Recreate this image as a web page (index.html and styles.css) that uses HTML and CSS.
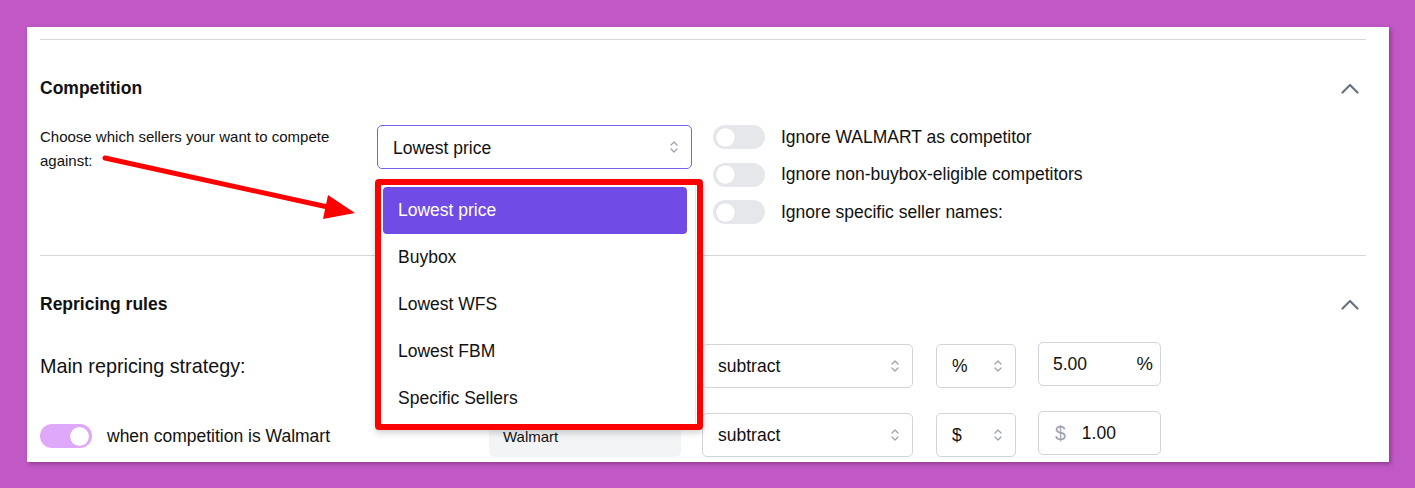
FILE: index.html
```html
<!DOCTYPE html>
<html>
<head>
<meta charset="utf-8">
<link rel="stylesheet" href="styles.css">
</head>
<body>
<div class="card">
  <section class="sec sec-comp">
    <div class="sec-head">
      <h2>Competition</h2>
      <svg class="chev" width="18" height="12" viewBox="0 0 18 12"><path d="M1.5 10.5 L9 3 L16.5 10.5" fill="none" stroke="#6b7280" stroke-width="2.2" stroke-linecap="round" stroke-linejoin="round"/></svg>
    </div>
    <div class="comp-row">
      <div class="comp-label">Choose which sellers your want to compete against:</div>
      <div class="select select-main">
        <span class="sel-text">Lowest price</span>
        <svg class="updown" width="10" height="16" viewBox="0 0 10 16"><path d="M2 6 L5 3 L8 6 M2 10 L5 13 L8 10" fill="none" stroke="#9ca3af" stroke-width="1.3" stroke-linecap="round" stroke-linejoin="round"/></svg>
      </div>
      <div class="toggles">
        <div class="t-row"><span class="toggle"><span class="knob"></span></span><span class="t-label">Ignore WALMART as competitor</span></div>
        <div class="t-row"><span class="toggle"><span class="knob"></span></span><span class="t-label">Ignore non-buybox-eligible competitors</span></div>
        <div class="t-row"><span class="toggle"><span class="knob"></span></span><span class="t-label">Ignore specific seller names:</span></div>
      </div>
    </div>
  </section>
  <section class="sec sec-rules">
    <div class="sec-head">
      <h2>Repricing rules</h2>
      <svg class="chev" width="18" height="12" viewBox="0 0 18 12"><path d="M1.5 10.5 L9 3 L16.5 10.5" fill="none" stroke="#6b7280" stroke-width="2.2" stroke-linecap="round" stroke-linejoin="round"/></svg>
    </div>
    <div class="rule-row first">
      <div class="rule-label big">Main repricing strategy:</div>
      <div class="mid"></div>
      <div class="select op">
        <span>subtract</span>
        <svg class="updown" width="10" height="16" viewBox="0 0 10 16"><path d="M2 6 L5 3 L8 6 M2 10 L5 13 L8 10" fill="none" stroke="#9ca3af" stroke-width="1.3" stroke-linecap="round" stroke-linejoin="round"/></svg>
      </div>
      <div class="select unit">
        <span>%</span>
        <svg class="updown" width="10" height="16" viewBox="0 0 10 16"><path d="M2 6 L5 3 L8 6 M2 10 L5 13 L8 10" fill="none" stroke="#9ca3af" stroke-width="1.3" stroke-linecap="round" stroke-linejoin="round"/></svg>
      </div>
      <div class="input">
        <span>5.00</span><span class="suffix">%</span>
      </div>
    </div>
    <div class="rule-row second">
      <div class="rule-label"><span class="toggle on"><span class="knob"></span></span><span class="t-label">when competition is Walmart</span></div>
      <div class="mid"><div class="chip">Walmart</div></div>
      <div class="select op">
        <span>subtract</span>
        <svg class="updown" width="10" height="16" viewBox="0 0 10 16"><path d="M2 6 L5 3 L8 6 M2 10 L5 13 L8 10" fill="none" stroke="#9ca3af" stroke-width="1.3" stroke-linecap="round" stroke-linejoin="round"/></svg>
      </div>
      <div class="select unit">
        <span>$</span>
        <svg class="updown" width="10" height="16" viewBox="0 0 10 16"><path d="M2 6 L5 3 L8 6 M2 10 L5 13 L8 10" fill="none" stroke="#9ca3af" stroke-width="1.3" stroke-linecap="round" stroke-linejoin="round"/></svg>
      </div>
      <div class="input dollar">
        <span class="prefix">$</span><span>1.00</span>
      </div>
    </div>
  </section>

  <div class="dropdown">
    <ul class="list">
      <li class="active">Lowest price</li>
      <li>Buybox</li>
      <li>Lowest WFS</li>
      <li>Lowest FBM</li>
      <li>Specific Sellers</li>
    </ul>
  </div>
</div>
<svg class="arrow" width="1415" height="488" viewBox="0 0 1415 488">
  <line x1="105" y1="158" x2="330" y2="207.5" stroke="#ff0000" stroke-width="5" stroke-linecap="round"/>
  <polygon points="355,213 328,195 323,219" fill="#ff0000"/>
</svg>
</body>
</html>
```
FILE: styles.css
```css
* { box-sizing: border-box; }
html, body { margin: 0; padding: 0; }
body {
  background: #c158c5;
  font-family: "Liberation Sans", Arial, Helvetica, sans-serif;
  color: #111;
  width: 1415px;
  height: 488px;
  position: relative;
  overflow: hidden;
  padding-top: 27px;
  padding-left: 27px;
}
.card {
  position: relative;
  width: 1362px;
  height: 435px;
  background: #fff;
  padding: 12px 23px 0 13px;
  overflow: hidden;
  box-shadow: 2px 2px 4px rgba(60, 0, 60, 0.35);
}
.sec {
  border-top: 1px solid #d6d6da;
  padding-top: 35px;
}
.sec-comp { height: 216px; }
.sec-head {
  display: flex;
  justify-content: space-between;
  align-items: center;
  height: 24px;
}
.sec-head h2 {
  margin: 0;
  font-size: 17.5px;
  font-weight: bold;
  line-height: 24px;
  position: relative;
  top: 1px;
}
.chev { margin-right: 7px; margin-top: 1px; }
.comp-row {
  display: flex;
  margin-top: 26px;
}
.comp-label {
  width: 337px;
  font-size: 15px;
  line-height: 24px;
  padding-right: 30px;
}
.select {
  display: flex;
  align-items: center;
  justify-content: space-between;
  height: 44px;
  border: 1px solid #d1d5db;
  border-radius: 5px;
  padding: 0 15px;
  font-size: 17.5px;
  background: #fff;
}
.select-main {
  width: 315px;
  border-color: #7b60e8;
}
.sel-text { position: relative; top: 1px; }
.updown { flex: none; margin-right: -3px; }
.toggles {
  margin-left: 21px;
  display: flex;
  flex-direction: column;
  gap: 13.5px;
}
.t-row {
  display: flex;
  align-items: center;
  height: 24px;
}
.toggle {
  flex: none;
  display: inline-flex;
  align-items: center;
  width: 52px;
  height: 24px;
  border-radius: 12px;
  background: #e5e7eb;
  padding: 0 3px;
}
.knob {
  width: 19px;
  height: 19px;
  border-radius: 50%;
  background: #fff;
  box-shadow: 0 0 1px rgba(0,0,0,0.15);
}
.toggle.on {
  background: #e0a8fa;
  justify-content: flex-end;
  padding: 0 3px;
}
.t-label {
  margin-left: 16px;
  font-size: 17.5px;
}
.rule-row {
  display: flex;
  height: 46px;
  margin-top: 23px;
}
.rule-row.first { margin-top: 27px; }
.rule-label {
  width: 449px;
  display: flex;
  align-items: center;
  font-size: 17.5px;
}
.rule-row.second .rule-label { padding-top: 4px; }
.rule-label .t-label { margin-left: 15px; }
.rule-label.big { font-size: 19.8px; padding-top: 2px; }
.mid {
  width: 192px;
  display: flex;
  align-items: center;
}
.chip {
  width: 192px;
  height: 43px;
  margin-top: 2px;
  background: #f3f4f6;
  border-radius: 6px;
  font-size: 15px;
  display: flex;
  align-items: center;
  padding-left: 14px;
  padding-top: 2px;
}
.select.op {
  width: 211px;
  margin-left: 21px;
  margin-top: 2px;
}
.select.unit {
  width: 80px;
  margin-left: 23px;
  margin-top: 2px;
}
.input {
  width: 123px;
  height: 44px;
  margin-left: 22px;
  border: 1px solid #d1d5db;
  border-radius: 5px;
  display: flex;
  align-items: center;
  justify-content: space-between;
  padding: 0 7px 0 14px;
  font-size: 17.5px;
}
.input .suffix { font-size: 18.5px; }
.input.dollar {
  justify-content: flex-start;
  padding-left: 16px;
}
.input .prefix {
  color: #9ca3af;
  font-size: 19.5px;
  margin-right: 16px;
}
.dropdown {
  position: absolute;
  left: 348px;
  top: 152px;
  width: 328px;
  height: 251px;
  border: 6px solid #ff0000;
  border-radius: 4px;
  background: #fff;
  box-shadow: 0 3px 6px rgba(0,0,0,0.18);
  display: flex;
}
.list {
  list-style: none;
  margin: 0 1px 0 0;
  padding: 2px 8px 0 2px;
  flex: 1;
  border-right: 1px solid #e5e7eb;
}
.list li {
  height: 47px;
  line-height: 46px;
  padding-left: 15px;
  font-size: 17.5px;
  border-radius: 4px;
}
.list li.active {
  background: #714be6;
  color: #fff;
}
.arrow {
  position: absolute;
  left: 0;
  top: 0;
  pointer-events: none;
}
```
